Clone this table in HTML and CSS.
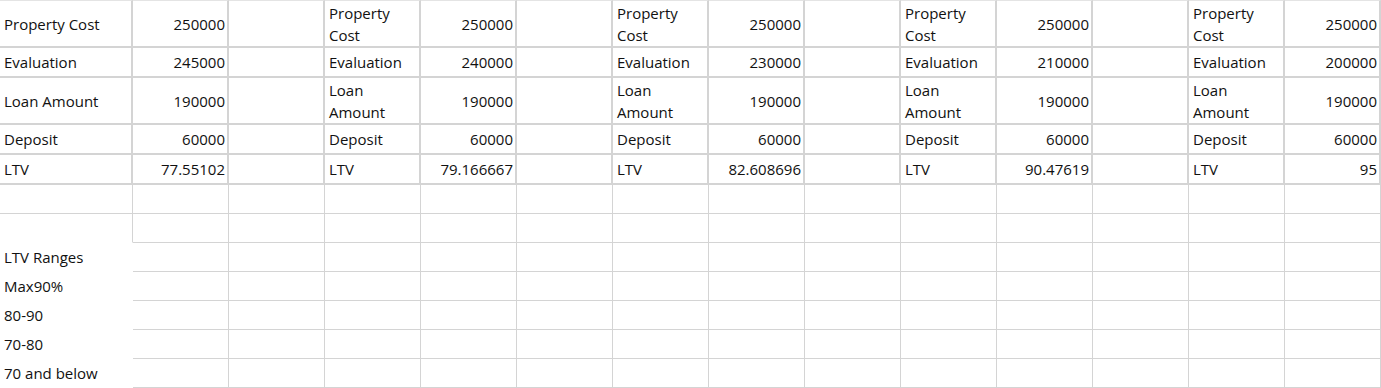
FILE: index.html
```html
<!DOCTYPE html>
<html lang="en">
<head>
<meta charset="utf-8">
<title>LTV sheet</title>
<link rel="stylesheet" href="styles.css">
</head>
<body>
<table class="sheet">
  <colgroup>
    <col class="c-first">
    <col class="c"><col class="c"><col class="c"><col class="c"><col class="c"><col class="c">
    <col class="c"><col class="c"><col class="c"><col class="c"><col class="c"><col class="c"><col class="c">
  </colgroup>
  <tbody class="top">
    <tr class="r-tall r-first">
      <td>Property Cost</td><td class="num">250000</td><td></td>
      <td>Property Cost</td><td class="num">250000</td><td></td>
      <td>Property Cost</td><td class="num">250000</td><td></td>
      <td>Property Cost</td><td class="num">250000</td><td></td>
      <td>Property Cost</td><td class="num">250000</td>
    </tr>
    <tr class="r-short">
      <td>Evaluation</td><td class="num">245000</td><td></td>
      <td>Evaluation</td><td class="num">240000</td><td></td>
      <td>Evaluation</td><td class="num">230000</td><td></td>
      <td>Evaluation</td><td class="num">210000</td><td></td>
      <td>Evaluation</td><td class="num">200000</td>
    </tr>
    <tr class="r-tall">
      <td>Loan Amount</td><td class="num">190000</td><td></td>
      <td>Loan Amount</td><td class="num">190000</td><td></td>
      <td>Loan Amount</td><td class="num">190000</td><td></td>
      <td>Loan Amount</td><td class="num">190000</td><td></td>
      <td>Loan Amount</td><td class="num">190000</td>
    </tr>
    <tr class="r-short">
      <td>Deposit</td><td class="num">60000</td><td></td>
      <td>Deposit</td><td class="num">60000</td><td></td>
      <td>Deposit</td><td class="num">60000</td><td></td>
      <td>Deposit</td><td class="num">60000</td><td></td>
      <td>Deposit</td><td class="num">60000</td>
    </tr>
    <tr class="r-short">
      <td>LTV</td><td class="num">77.55102</td><td></td>
      <td>LTV</td><td class="num">79.166667</td><td></td>
      <td>LTV</td><td class="num">82.608696</td><td></td>
      <td>LTV</td><td class="num">90.47619</td><td></td>
      <td>LTV</td><td class="num">95</td>
    </tr>
  </tbody>
  <tbody class="bottom">
    <tr>
      <td></td><td></td><td></td><td></td><td></td><td></td><td></td><td></td><td></td><td></td><td></td><td></td><td></td><td></td>
    </tr>
    <tr>
      <td class="no-bottom"></td><td></td><td></td><td></td><td></td><td></td><td></td><td></td><td></td><td></td><td></td><td></td><td></td><td></td>
    </tr>
    <tr>
      <td class="plain">LTV Ranges</td><td></td><td></td><td></td><td></td><td></td><td></td><td></td><td></td><td></td><td></td><td></td><td></td><td></td>
    </tr>
    <tr>
      <td class="plain">Max90%</td><td></td><td></td><td></td><td></td><td></td><td></td><td></td><td></td><td></td><td></td><td></td><td></td><td></td>
    </tr>
    <tr>
      <td class="plain">80-90</td><td></td><td></td><td></td><td></td><td></td><td></td><td></td><td></td><td></td><td></td><td></td><td></td><td></td>
    </tr>
    <tr>
      <td class="plain">70-80</td><td></td><td></td><td></td><td></td><td></td><td></td><td></td><td></td><td></td><td></td><td></td><td></td><td></td>
    </tr>
    <tr>
      <td class="plain">70 and below</td><td></td><td></td><td></td><td></td><td></td><td></td><td></td><td></td><td></td><td></td><td></td><td></td><td></td>
    </tr>
  </tbody>
</table>
</body>
</html>
```

FILE: styles.css
```css
html, body {
  margin: 0;
  padding: 0;
  background: #ffffff;
}

.sheet {
  border-collapse: separate;
  border-spacing: 0;
  table-layout: fixed;
  width: 1381px;
  font-family: "Open Sans", "Noto Sans", sans-serif;
  font-size: 15px;
  line-height: 22px;
  color: #111111;
}

.c-first { width: 133px; }
.c { width: 96px; }

.sheet td {
  box-sizing: border-box;
  padding: 0 2px 0 4px;
  vertical-align: middle;
  overflow: hidden;
  white-space: normal;
}

.top td {
  border-right: 2px solid #d4d4d4;
  border-bottom: 2px solid #d4d4d4;
}

.r-first td {
  border-top: 1px solid #e4e4e4;
}

.r-first td { height: 48px; }
.r-tall td { height: 47px; }
.r-first.r-tall td { height: 48px; }
.r-short td { height: 30px; }

.top td.num {
  text-align: right;
}

.bottom td {
  height: 29px;
  border-right: 1px solid #d4d4d4;
  border-bottom: 1px solid #d4d4d4;
}

.bottom td.no-bottom {
  border-bottom: 1px solid transparent;
}

.bottom td.plain {
  border-right: 1px solid transparent;
  border-bottom: 1px solid transparent;
  white-space: nowrap;
}
```
